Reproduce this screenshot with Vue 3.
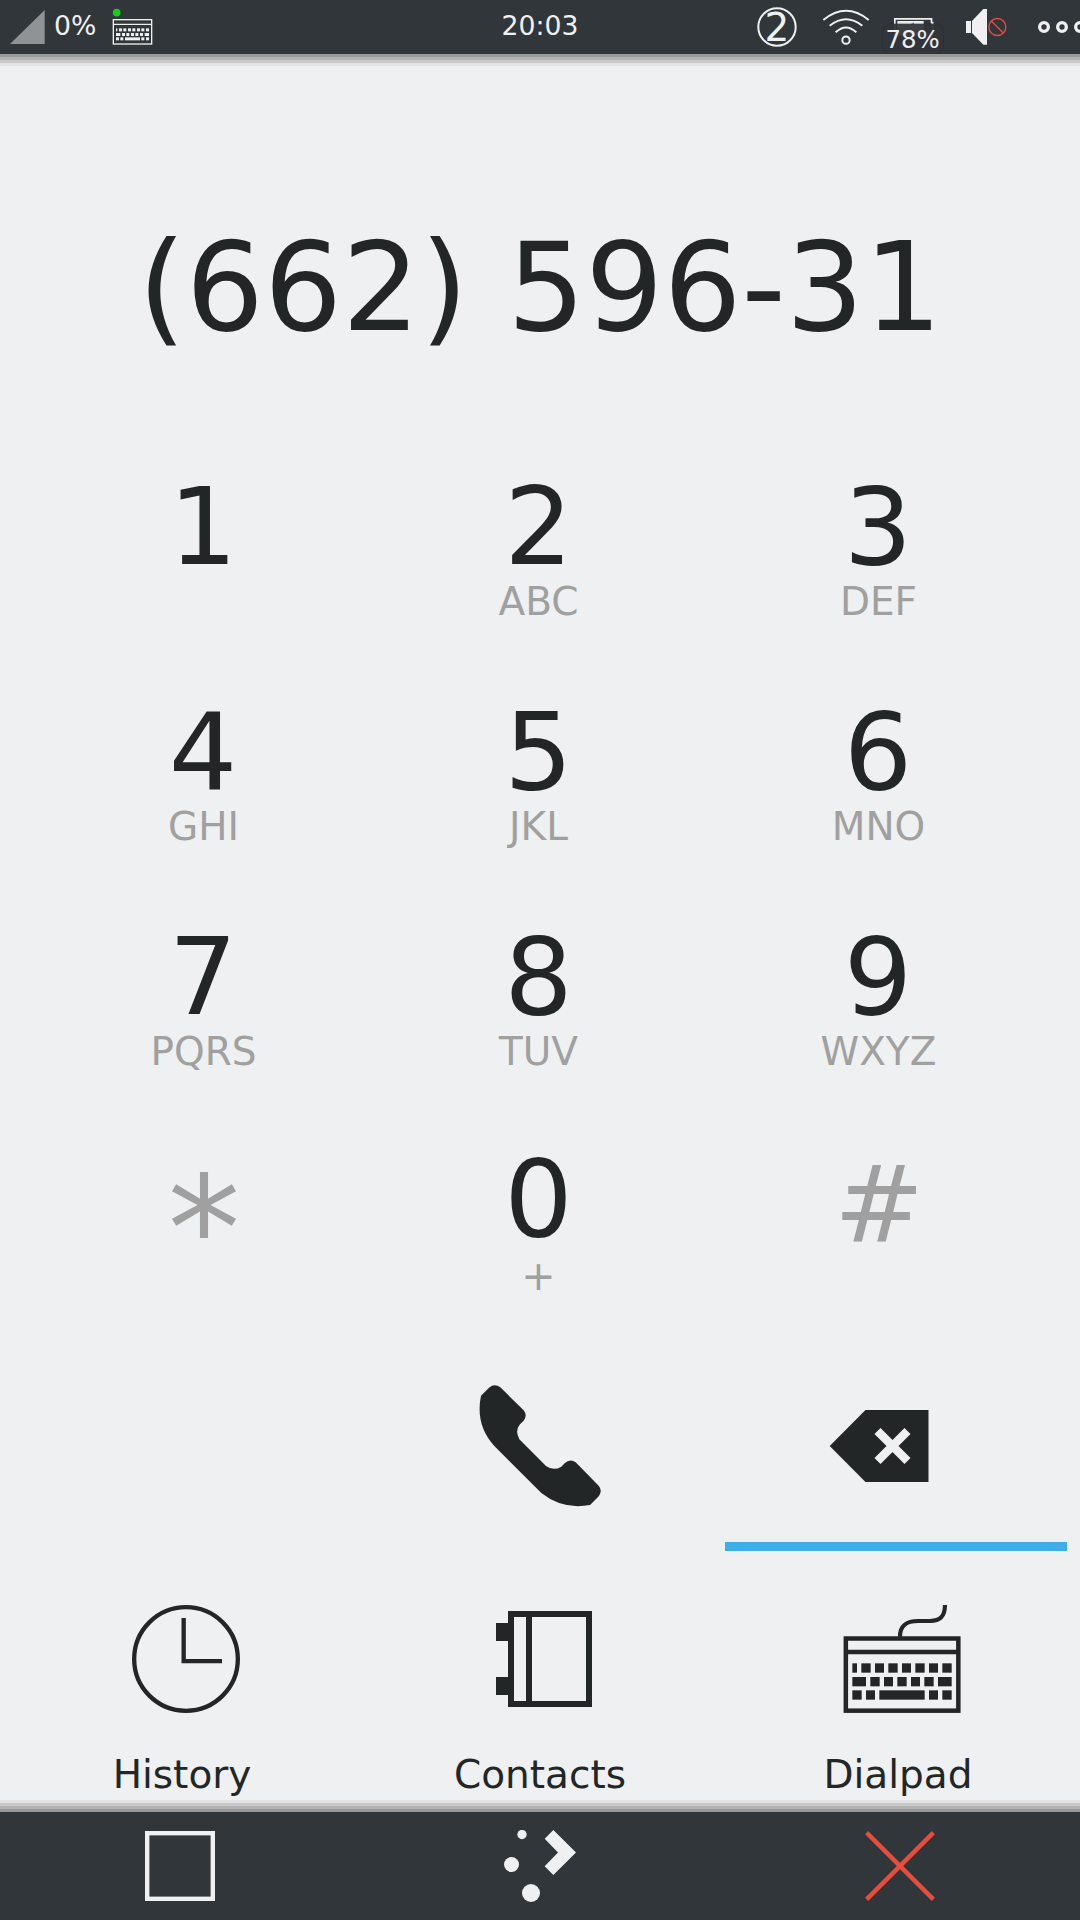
<template>
  <div class="phone">
    <header class="status-bar">
      <div class="status-left">
        <svg class="signal" viewBox="0 0 35 34">
          <path d="M0 34 L34.7 0 V34 Z" fill="#8f9395" />
        </svg>
        <span class="status-text signal-text">{{ signal }}%</span>
        <svg class="mini-keyboard" viewBox="0 0 123 110">
          <circle cx="14" cy="14" r="11.5" fill="#11d116" />
          <g fill="none" stroke="#eff0f1" stroke-width="4">
            <rect x="4" y="35" width="115" height="73" />
            <path d="M4 49 H119" />
          </g>
          <g fill="#eff0f1">
            <rect
              v-for="(k, i) in miniKeys"
              :key="i"
              :x="k[0]"
              :y="k[1]"
              :width="k[2]"
              height="9"
            />
          </g>
        </svg>
      </div>

      <span class="status-text clock">{{ time }}</span>

      <div class="status-right">
        <svg class="badge-count" viewBox="0 0 40 40">
          <circle cx="20" cy="20" r="18.7" fill="none" stroke="#eff0f1" stroke-width="2" />
          <text x="19.8" y="33.6" text-anchor="middle" font-size="39" fill="#eff0f1">2</text>
        </svg>
        <svg class="wifi" viewBox="306 24 144 114">
          <g fill="none" stroke="#eff0f1" stroke-width="6">
            <path d="M310 60 Q378 5 446 60" />
            <path d="M329 77 Q378 38 427 77" />
            <path d="M347 97 Q378 68 409 97" />
            <circle cx="378" cy="120.5" r="11" />
          </g>
        </svg>
        <div class="battery">
          <svg class="battery-icon" viewBox="0 0 120 54">
            <path d="M2.500 53 V2.500 H112.500 V14 H116 V53" fill="none" stroke="#eff0f1" stroke-width="5" />
            <rect x="10" y="9" width="79" height="44" fill="#eff0f1" />
            <path d="M47 20 L60 13 V22 Z" fill="#1abc9c" />
          </svg>
          <span class="battery-text">{{ battery }}%</span>
        </div>
        <svg class="volume" viewBox="735 24 129 114">
          <rect x="738" y="63" width="15" height="36" fill="#eff0f1" />
          <path d="M756 63 L790 27 H801 V134 H790 L756 99 Z" fill="#eff0f1" />
          <g fill="none" stroke="#e74c3c" stroke-width="4">
            <circle cx="832" cy="81" r="25.500" />
            <path d="M814 63 L850 99" />
          </g>
        </svg>
        <svg class="more" viewBox="951 60 129 42">
          <g fill="none" stroke="#eff0f1" stroke-width="10">
            <circle cx="972" cy="81" r="13" />
            <circle cx="1026" cy="81" r="13" />
            <circle cx="1080" cy="81" r="13" />
          </g>
        </svg>
      </div>
    </header>

    <main class="dialer">
      <div class="number">{{ number }}</div>

      <div class="keypad">
        <button
          v-for="key in keys"
          :key="key.digit"
          class="key"
          :class="key.type"
          @click="press(key.digit)"
        >
          <span class="digit">{{ key.digit }}</span>
          <span v-if="key.letters" class="letters">{{ key.letters }}</span>
        </button>
      </div>

      <div class="actions">
        <span></span>
        <button class="action" aria-label="Call">
          <svg class="call-icon" viewBox="57 60 480 390">
            <path
              fill="#232627"
              d="M123 107 L147 83 Q164 69 181 82 L251 151 Q263 166 251 182 L240 193 Q224 212 238 238 L318 318 Q340 334 364 320 L374 310 Q390 294 407 307 L476 377 Q488 391 477 408 L450 435 Q368 450 304 399 L163 258 Q105 195 123 107 Z"
            />
          </svg>
        </button>
        <button class="action" aria-label="Delete" @click="erase">
          <svg class="erase-icon" viewBox="0 0 102 74">
            <path d="M2.700 38 L38.500 2 H101.500 V74 H38.500 Z" fill="#232627" />
            <path d="M50.500 23 L80.500 53 M80.500 23 L50.500 53" stroke="#eff0f1" stroke-width="8.500" />
          </svg>
        </button>
      </div>

      <nav class="tabs">
        <button
          v-for="tab in tabs"
          :key="tab"
          class="tab"
          :class="{ active: activeTab === tab }"
          @click="activeTab = tab"
        >
          <span class="indicator"></span>
          <svg v-if="tab === 'History'" class="tab-icon" viewBox="78 57 360 360">
            <g fill="none" stroke="#232627" stroke-width="13">
              <circle cx="258" cy="237" r="155.500" />
              <path d="M251 114 V243.500 H366" />
            </g>
          </svg>
          <svg v-else-if="tab === 'Contacts'" class="tab-icon" viewBox="132 57 360 360">
            <g fill="none" stroke="#232627" stroke-width="18">
              <rect x="213" y="102" width="234" height="270" />
              <path d="M267 102 V372" />
            </g>
            <path d="M168 129 H213 V183 H168 Z M168 291 H213 V345 H168 Z" fill="#232627" />
          </svg>
          <svg v-else class="tab-icon" viewBox="96 57 360 360">
            <g fill="none" stroke="#232627" stroke-width="13.500">
              <rect x="107.500" y="175.500" width="337.500" height="216.500" />
              <path d="M107 216 H445" />
              <path d="M270 170 C270 138 287 123 325 123 H360 C392 123 405 107 405 75" stroke-width="12.500" />
            </g>
            <g fill="#232627">
              <rect
                v-for="(k, i) in bigKeys"
                :key="i"
                :x="k[0]"
                :y="k[1]"
                :width="k[2]"
                height="28"
              />
            </g>
          </svg>
          <span class="tab-label">{{ tab }}</span>
        </button>
      </nav>
    </main>

    <footer class="nav-bar">
      <button class="nav-button" aria-label="Windows">
        <svg class="nav-icon" viewBox="0 0 72 72">
          <rect x="3.200" y="3.200" width="65.600" height="65.600" fill="none" stroke="#eff0f1" stroke-width="4.400" />
        </svg>
      </button>
      <button class="nav-button" aria-label="Home">
        <svg class="nav-icon" viewBox="1212 150 216 216">
          <g fill="#eff0f1">
            <circle cx="1266" cy="163.500" r="14" />
            <circle cx="1234.500" cy="253.500" r="22.500" />
            <circle cx="1293" cy="339" r="27" />
            <path d="M1360 150 L1428 217.500 L1360 285 L1334 259 L1374 217.500 L1334 176 Z" />
          </g>
        </svg>
      </button>
      <button class="nav-button" aria-label="Close">
        <svg class="nav-icon" viewBox="0 0 72 72">
          <path d="M2.600 2.600 L69.400 69.400 M69.400 2.600 L2.600 69.400" stroke="#e74c3c" stroke-width="4.400" />
        </svg>
      </button>
    </footer>
  </div>
</template>

<script setup>
import { ref } from 'vue'

const signal = ref(0)
const battery = ref(78)
const time = ref('20:03')
const number = ref('(662) 596-31')

const tabs = ['History', 'Contacts', 'Dialpad']
const activeTab = ref('Dialpad')

const keys = [
  { digit: '1', letters: '' },
  { digit: '2', letters: 'ABC' },
  { digit: '3', letters: 'DEF' },
  { digit: '4', letters: 'GHI' },
  { digit: '5', letters: 'JKL' },
  { digit: '6', letters: 'MNO' },
  { digit: '7', letters: 'PQRS' },
  { digit: '8', letters: 'TUV' },
  { digit: '9', letters: 'WXYZ' },
  { digit: '*', letters: '', type: 'star' },
  { digit: '0', letters: '+', type: 'zero' },
  { digit: '#', letters: '', type: 'hash' }
]

// [x, y, width] of every key cap
const bigKeys = [
  [127, 250, 14], [154, 250, 28], [195, 250, 27], [235, 250, 28], [276, 250, 27], [316, 250, 28], [357, 250, 27], [397, 250, 28],
  [127, 291, 41], [181, 291, 28], [222, 291, 27], [262, 291, 28], [303, 291, 27], [343, 291, 28], [384, 291, 41],
  [127, 331, 28], [168, 331, 27], [208, 331, 136], [357, 331, 27], [397, 331, 28]
]

const miniKeys = [
  [12, 61, 4], [21, 61, 9], [34, 61, 9], [48, 61, 9], [61, 61, 9], [75, 61, 9], [88, 61, 9], [102, 61, 9],
  [12, 75, 13], [30, 75, 9], [43, 75, 9], [57, 75, 9], [70, 75, 9], [84, 75, 9], [98, 75, 13],
  [12, 88, 9], [25, 88, 9], [39, 88, 45], [88, 88, 9], [102, 88, 9]
]

function press(digit) {
  number.value += digit
}

function erase() {
  number.value = number.value.slice(0, -1)
}
</script>

<style>
body {
  margin: 0;
  background: #eff0f1;
}
</style>

<style scoped>
.phone {
  display: flex;
  flex-direction: column;
  width: 1080px;
  height: 1920px;
  overflow: hidden;
  background: #eff0f1;
  color: #232627;
  font-family: "DejaVu Sans", sans-serif;
}

button {
  padding: 0;
  border: none;
  background: none;
  color: inherit;
  font: inherit;
  cursor: pointer;
}

svg {
  display: block;
  flex-shrink: 0;
}

.status-bar {
  position: relative;
  display: grid;
  grid-template-columns: 1fr auto 1fr;
  height: 54px;
  flex-shrink: 0;
  background: #31363b;
  color: #eff0f1;
}

.status-bar::after,
.nav-bar::before {
  content: "";
  position: absolute;
  left: 0;
  right: 0;
  height: 12px;
}

.status-bar::after {
  top: 100%;
  background: linear-gradient(#999999 3px, #b2b2b3 3px 6px, #cacacb 6px 9px, #e3e3e4 9px);
}

.status-left,
.status-right {
  display: flex;
  align-items: flex-start;
}

.status-right {
  justify-content: flex-end;
}

.status-text {
  font-size: 26.700px;
  line-height: 52px;
}

.signal {
  width: 35px;
  height: 34px;
  margin: 10px 9px 0 10px;
}

.signal-text {
  width: 58px;
}

.mini-keyboard {
  width: 41px;
  height: 36.7px;
  margin-top: 8px;
}

.clock {
  text-align: center;
}

.badge-count {
  overflow: visible;
  width: 40px;
  height: 40px;
  margin: 7px 25px 0 0;
}

.wifi {
  width: 48px;
  height: 38px;
  margin: 8px 12px 0 0;
}

.battery {
  display: flex;
  flex-direction: column;
  align-items: center;
  width: 61px;
  height: 54px;
  margin-right: 22px;
}

.battery-icon {
  width: 40px;
  height: 18px;
  margin: 18px 0 -12px 3px;
}

.battery-text {
  position: relative;
  width: 60px;
  height: 30px;
  border-radius: 9px;
  background: rgba(49, 54, 59, 0.95);
  box-shadow: 0 0 1px 0.500px rgba(35, 38, 41, 0.35);
  font-size: 24.400px;
  line-height: 31px;
  text-align: center;
}

.volume {
  width: 43px;
  height: 38px;
  margin: 8px 29px 0 0;
}

.more {
  width: 43px;
  height: 14px;
  margin-top: 20px;
}

.dialer {
  flex: 1;
}

.number {
  height: 243px;
  padding-top: 185px;
  font-size: 122.800px;
  line-height: 98px;
  text-align: center;
}

.keypad {
  display: grid;
  grid-template-columns: 336px 335px 344px;
  grid-template-rows: 225px 225px 225px 223px;
  padding-left: 35px;
}

.key {
  display: flex;
  flex-direction: column;
  align-items: center;
}

.digit {
  height: 90px;
  font-size: 107.700px;
  line-height: 89px;
}

.letters {
  height: 60px;
  color: #a0a0a0;
  font-size: 39px;
  line-height: 60px;
}

.key:not(:nth-child(3n + 2)) .letters {
  margin-left: 1px;
}

.zero .digit {
  margin: -3px 0 2px;
}

.zero .letters {
  font-size: 41px;
}

.star .digit,
.hash .digit {
  margin-left: 2px;
  color: #a0a0a0;
}

.star .digit {
  margin-top: 27px;
  font-size: 145px;
}

.hash .digit {
  margin-top: 3px;
}

.actions {
  display: grid;
  grid-template-columns: 336px 335px 344px;
  height: 130px;
  padding-left: 35px;
}

.action {
  display: flex;
  align-items: center;
  justify-content: center;
}

.call-icon {
  width: 160px;
  height: 130px;
}

.erase-icon {
  width: 102px;
  height: 74px;
}

.tabs {
  display: grid;
  grid-template-columns: repeat(3, 358px);
  padding: 32px 3px 0;
}

.tab {
  display: flex;
  flex-direction: column;
  align-items: center;
}

.indicator {
  width: 342px;
  height: 9px;
  margin: 0 4px 48px 0;
}

.tab.active .indicator {
  background: #3daee9;
}

.tab-icon {
  width: 120px;
  height: 120px;
  margin-left: 8px;
}

.tab-label {
  margin-top: 31px;
  font-size: 39px;
  line-height: 50px;
}

.nav-bar {
  position: relative;
  display: grid;
  grid-template-columns: repeat(3, 360px);
  height: 108px;
  flex-shrink: 0;
  background: #31363b;
}

.nav-bar::before {
  bottom: 100%;
  background: linear-gradient(#e3e3e4 3px, #cacacb 3px 6px, #b2b2b3 6px 9px, #999999 9px);
}

.nav-button {
  display: flex;
  align-items: center;
  justify-content: center;
}

.nav-icon {
  width: 72px;
  height: 72px;
}
</style>
